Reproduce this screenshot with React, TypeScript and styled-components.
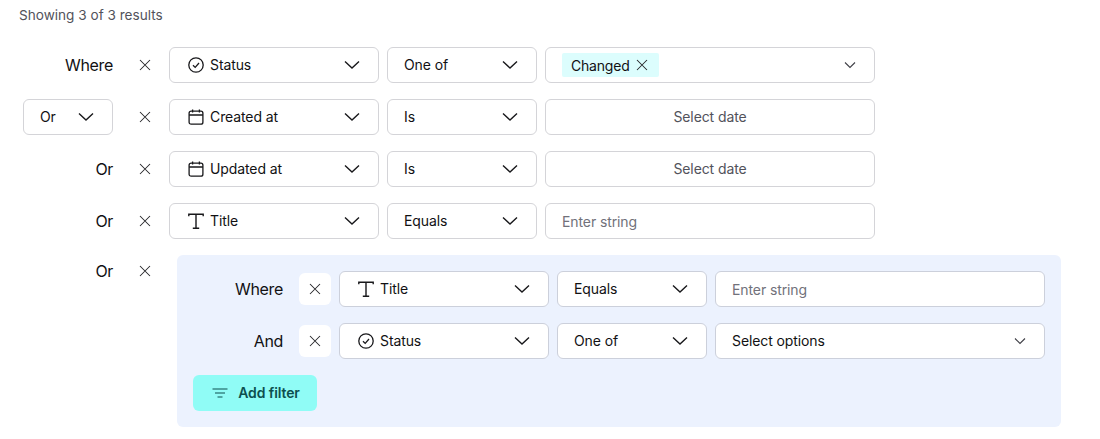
import React from 'react';
import styled, { createGlobalStyle } from 'styled-components';

const GlobalStyle = createGlobalStyle`
  html, body {
    margin: 0;
    padding: 0;
    background: #fff;
    font-family: Inter, "Liberation Sans", sans-serif;
    color: #111113;
  }
`;

const Chevron = ({ small }: { small?: boolean }) =>
  small ? (
    <svg width="14" height="14" viewBox="0 0 14 14" fill="none" stroke="#3f3f46" strokeWidth="1.1">
      <path d="M3 4.5 8 9.5l5-5" />
    </svg>
  ) : (
    <svg width="16" height="16" viewBox="0 0 16 16" fill="none" stroke="#18181b" strokeWidth="1.4">
      <path d="M1 4.5 8 11l7-6.5" />
    </svg>
  );

const Cross = ({ size = 12 }: { size?: number }) => (
  <svg width={size} height={size} viewBox="0 0 12 12" fill="none" stroke="#27272a" strokeWidth="1.05">
    <path d="M1 1l10 10M11 1 1 11" />
  </svg>
);

const StatusIcon = () => (
  <svg width="16" height="16" viewBox="0 0 16 16" fill="none" stroke="#18181b" strokeWidth="1.3">
    <circle cx="8" cy="8" r="7.2" />
    <path d="M5 8.2 7.2 10.4 11 6" />
  </svg>
);

const CalendarIcon = () => (
  <svg width="16" height="16" viewBox="0 0 16 16" fill="none" stroke="#18181b" strokeWidth="1.3">
    <rect x="1.1" y="2.2" width="13.8" height="13" rx="2" />
    <path d="M1.1 6h13.8M4.6.4v3.2M11.4.4v3.2" />
  </svg>
);

const TitleIcon = () => (
  <svg width="16" height="16" viewBox="0 0 16 16" fill="none" stroke="#18181b" strokeWidth="1.4">
    <path d="M.8 3.2V1.2h14.4v2M8 1.2v14M4.8 15.2h6.4" />
  </svg>
);

const FilterIcon = () => (
  <svg width="16" height="12" viewBox="0 0 16 12" fill="none" stroke="#0d4f4f" strokeWidth="1.2">
    <path d="M.5 2h15M3 6h10M5.5 10h5" />
  </svg>
);

const icons = {
  status: <StatusIcon />,
  calendar: <CalendarIcon />,
  title: <TitleIcon />,
};

type IconName = keyof typeof icons;

type RuleItem = {
  label: string;
  field: string;
  icon: IconName;
  operator: string;
  value: React.ReactNode;
};

const FieldSelect = ({ icon, field }: { icon: IconName; field: string }) => (
  <Control $width={210}>
    <FieldName>
      {icons[icon]}
      {field}
    </FieldName>
    <Chevron />
  </Control>
);

const OperatorSelect = ({ operator }: { operator: string }) => (
  <Control $width={150}>
    {operator}
    <Chevron />
  </Control>
);

const DateValue = () => <DateButton>Select date</DateButton>;
const StringValue = () => <StringInput>Enter string</StringInput>;

const OptionsValue = ({ children }: { children: React.ReactNode }) => (
  <Control $width={330}>
    {children}
    <Chevron small />
  </Control>
);

const ChangedTag = () => (
  <Tag>
    Changed
    <Cross />
  </Tag>
);

const Rule = ({ item, nested }: { item: RuleItem; nested?: boolean }) => (
  <Row>
    <LabelCell>{item.label}</LabelCell>
    <RemoveButton $nested={nested}>
      <Cross />
    </RemoveButton>
    <FieldSelect icon={item.icon} field={item.field} />
    <OperatorSelect operator={item.operator} />
    {item.value}
  </Row>
);

const App = () => (
  <Page>
    <GlobalStyle />
    <Results>Showing 3 of 3 results</Results>
    <Rules>
      <Rule
        item={{
          label: 'Where',
          field: 'Status',
          icon: 'status',
          operator: 'One of',
          value: (
            <OptionsValue>
              <ChangedTag />
            </OptionsValue>
          ),
        }}
      />
      <Row>
        <LabelCell>
          <ConjunctionSelect>
            Or
            <Chevron />
          </ConjunctionSelect>
        </LabelCell>
        <RemoveButton>
          <Cross />
        </RemoveButton>
        <FieldSelect icon="calendar" field="Created at" />
        <OperatorSelect operator="Is" />
        <DateValue />
      </Row>
      <Rule item={{ label: 'Or', field: 'Updated at', icon: 'calendar', operator: 'Is', value: <DateValue /> }} />
      <Rule item={{ label: 'Or', field: 'Title', icon: 'title', operator: 'Equals', value: <StringValue /> }} />
      <GroupRow>
        <LabelCell>Or</LabelCell>
        <RemoveButton>
          <Cross />
        </RemoveButton>
        <Group>
          <Rule
            nested
            item={{ label: 'Where', field: 'Title', icon: 'title', operator: 'Equals', value: <StringValue /> }}
          />
          <Rule
            nested
            item={{
              label: 'And',
              field: 'Status',
              icon: 'status',
              operator: 'One of',
              value: (
                <OptionsValue>
                  <span>Select options</span>
                </OptionsValue>
              ),
            }}
          />
          <AddFilter>
            <FilterIcon />
            Add filter
          </AddFilter>
        </Group>
      </GroupRow>
    </Rules>
  </Page>
);

export default App;

const Page = styled.div`
  width: 1100px;
  height: 439px;
  box-sizing: border-box;
  padding: 7px 0 0 19px;
  overflow: hidden;
  letter-spacing: -0.1px;
`;

const Results = styled.div`
  font-size: 13.6px;
  line-height: 16px;
  color: #52525b;
  letter-spacing: 0;
`;

const Rules = styled.div`
  display: flex;
  flex-direction: column;
  gap: 16px;
  margin: 24px 0 0 4px;
`;

const Row = styled.div`
  display: flex;
  align-items: center;
  gap: 8px;
  height: 36px;
`;

const GroupRow = styled.div`
  display: flex;
  align-items: flex-start;
  gap: 8px;
`;

const LabelCell = styled.div`
  width: 90px;
  height: 36px;
  flex: none;
  display: flex;
  align-items: center;
  justify-content: flex-end;
  font-size: 16px;
  letter-spacing: -0.35px;
  color: #111113;

  ${GroupRow} > & {
    height: 32px;
  }
`;

const RemoveButton = styled.div<{ $nested?: boolean }>`
  width: 32px;
  height: 32px;
  margin-left: 8px;
  flex: none;
  display: flex;
  align-items: center;
  justify-content: center;
  border-radius: 6px;
  background: ${({ $nested }) => ($nested ? '#fff' : 'transparent')};
`;

const Control = styled.div<{ $width: number }>`
  width: ${({ $width }) => $width}px;
  height: 36px;
  box-sizing: border-box;
  padding: 0 18px 1px 16px;
  flex: none;
  display: flex;
  align-items: center;
  justify-content: space-between;
  background: #fff;
  border: 1px solid #d4d4d8;
  border-radius: 6px;
  font-size: 14px;
  letter-spacing: -0.1px;
  color: #111113;
`;

const ConjunctionSelect = styled(Control).attrs({ $width: 90 })`
  padding-right: 18px;
`;

const FieldName = styled.span`
  display: flex;
  align-items: center;
  gap: 6px;
  padding-left: 2px;
`;

const DateButton = styled.div`
  width: 330px;
  height: 36px;
  box-sizing: border-box;
  padding-bottom: 1px;
  display: flex;
  align-items: center;
  justify-content: center;
  background: #fff;
  border: 1px solid #d4d4d8;
  border-radius: 6px;
  font-size: 14px;
  color: #52525b;
`;

const StringInput = styled.div`
  width: 330px;
  height: 36px;
  box-sizing: border-box;
  padding: 0 16px;
  display: flex;
  align-items: center;
  background: #fff;
  border: 1px solid #d4d4d8;
  border-radius: 6px;
  font-size: 14px;
  color: #71717a;
`;

const Tag = styled.span`
  height: 24px;
  padding: 0 11px 0 9px;
  margin-top: 1px;
  display: flex;
  align-items: center;
  gap: 6px;
  background: #dcfdfd;
  border-radius: 2px;
  font-size: 14px;
  letter-spacing: -0.2px;
  color: #111113;
`;

const Group = styled.div`
  width: 884px;
  box-sizing: border-box;
  margin-left: 8px;
  padding: 16px;
  display: flex;
  flex-direction: column;
  gap: 16px;
  background: #ecf2fe;
  border-radius: 6px;

  ${Control}, ${StringInput} {
    border-color: #ccd0db;
  }
`;

const AddFilter = styled.div`
  width: 124px;
  height: 36px;
  box-sizing: border-box;
  padding: 0 0 1px 2px;
  display: flex;
  align-items: center;
  justify-content: center;
  gap: 10px;
  background: #90fcf6;
  border-radius: 6px;
  font-size: 14px;
  font-weight: 600;
  color: #0d4f4f;
`;
